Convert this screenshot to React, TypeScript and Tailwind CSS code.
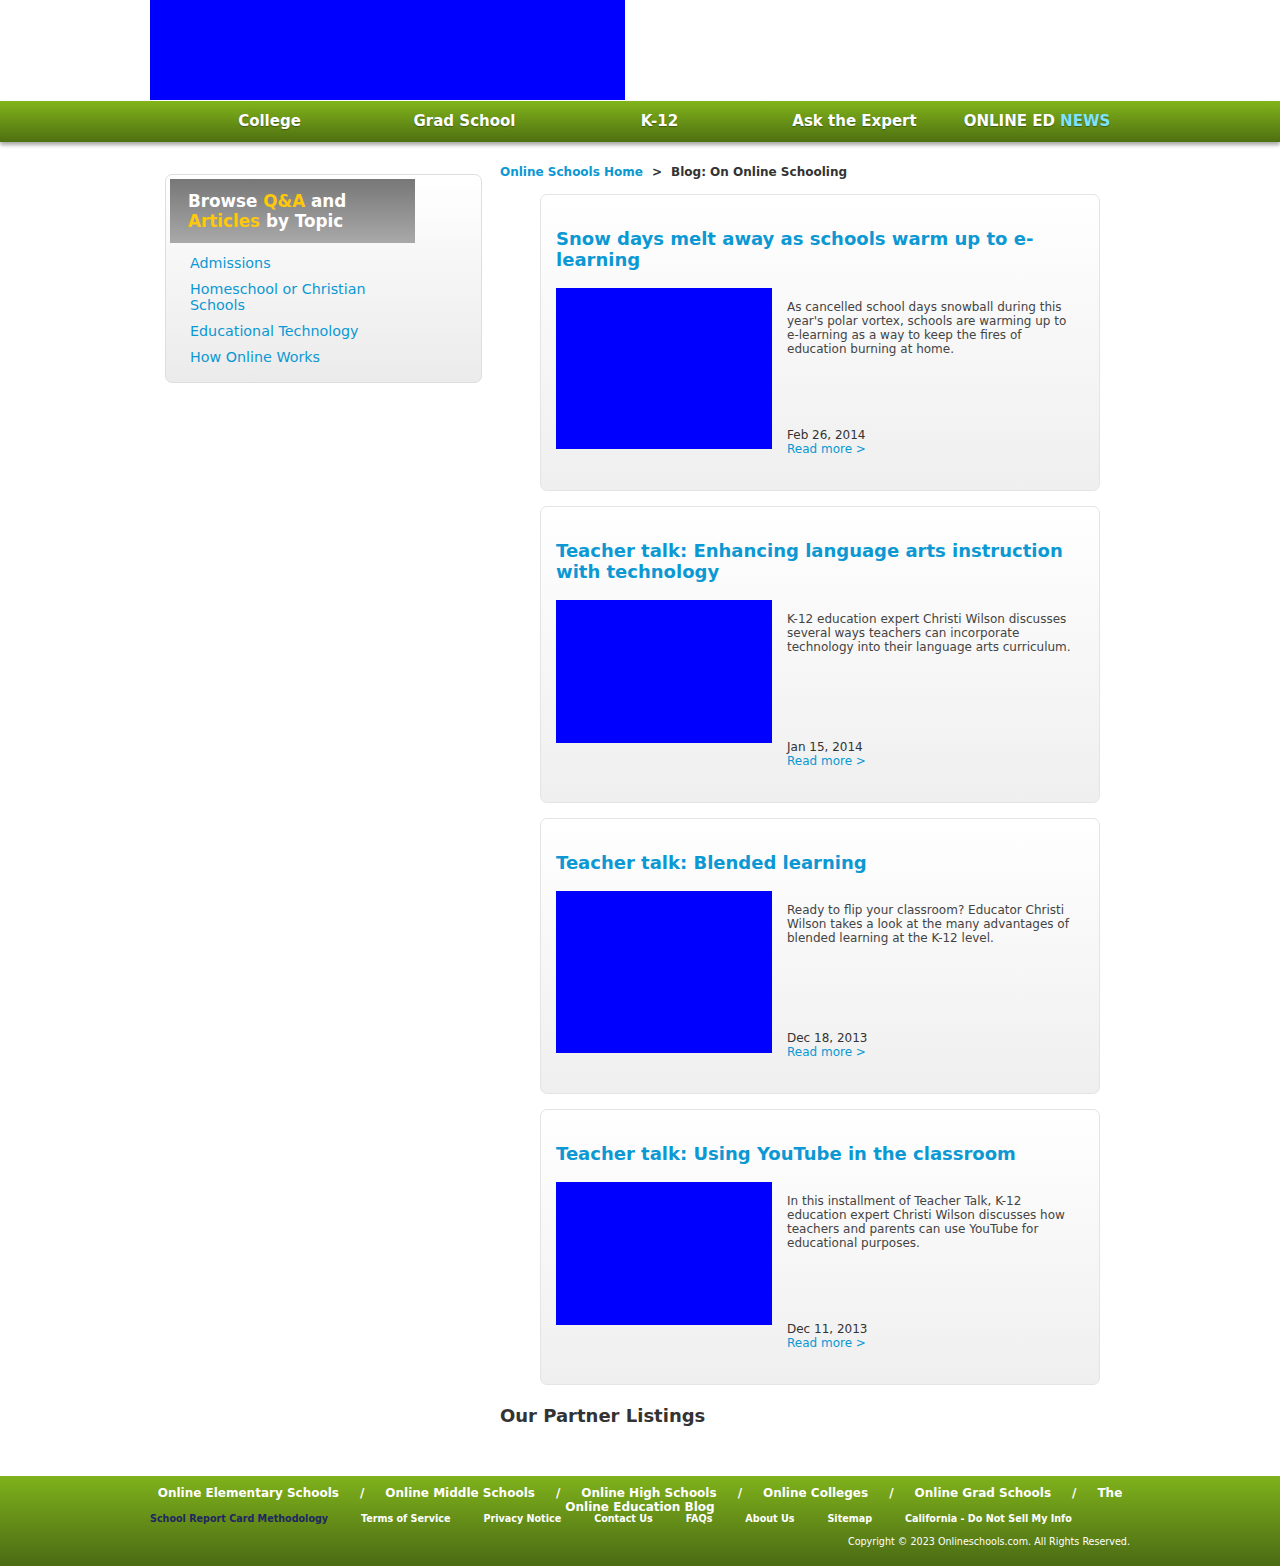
import { Fragment } from 'react';

const navItems = ['College', 'Grad School', 'K-12', 'Ask the Expert'];

const topics = ['Admissions', 'Homeschool or Christian Schools', 'Educational Technology', 'How Online Works'];

const posts = [
  {
    title: 'Snow days melt away as schools warm up to e-learning',
    text: "As cancelled school days snowball during this year's polar vortex, schools are warming up to e-learning as a way to keep the fires of education burning at home.",
    date: 'Feb 26, 2014',
    imgH: 'h-[161px]',
  },
  {
    title: 'Teacher talk: Enhancing language arts instruction with technology',
    text: 'K-12 education expert Christi Wilson discusses several ways teachers can incorporate technology into their language arts curriculum.',
    date: 'Jan 15, 2014',
    imgH: 'h-[143px]',
  },
  {
    title: 'Teacher talk: Blended learning',
    text: 'Ready to flip your classroom? Educator Christi Wilson takes a look at the many advantages of blended learning at the K-12 level.',
    date: 'Dec 18, 2013',
    imgH: 'h-[162px]',
  },
  {
    title: 'Teacher talk: Using YouTube in the classroom',
    text: 'In this installment of Teacher Talk, K-12 education expert Christi Wilson discusses how teachers and parents can use YouTube for educational purposes.',
    date: 'Dec 11, 2013',
    imgH: 'h-[143px]',
  },
];

const footerLinks = [
  'Online Elementary Schools',
  'Online Middle Schools',
  'Online High Schools',
  'Online Colleges',
  'Online Grad Schools',
  'The Online Education Blog',
];

const bottomLinks = ['Terms of Service', 'Privacy Notice', 'Contact Us', 'FAQs', 'About Us', 'Sitemap', 'California - Do Not Sell My Info'];

export default function App() {
  return (
    <div className="min-h-screen bg-white font-['DejaVu_Sans',sans-serif] text-[#333]">
      {/* header */}
      <div className="w-[980px] mx-auto h-[101px]">
        <div className="w-[475px] h-[100px] bg-[#0000ff]" />
      </div>

      {/* nav */}
      <div className="h-[41px] bg-gradient-to-b from-[#82b51b] to-[#4e7011] shadow-[0_3px_4px_rgba(0,0,0,0.35)] relative">
        <div className="w-[980px] mx-auto flex h-full pl-[22px] text-white font-bold text-[15px] [text-shadow:0_1px_1px_rgba(0,0,0,0.35)]">
          {navItems.map((n) => (
            <div key={n} className="w-[195px] flex items-center justify-center pb-[1px]">
              {n}
            </div>
          ))}
          <div className="w-[170px] flex items-center justify-center pb-[1px]">
            ONLINE ED&nbsp;<span className="text-[#7fe3ff]">NEWS</span>
          </div>
        </div>
      </div>

      {/* body */}
      <div className="w-[980px] mx-auto flex">
        <div className="w-[350px] pl-[15px] pt-[32px]">
          <div className="w-[317px] border border-[#dedede] rounded-[7px] bg-gradient-to-b from-white to-[#ebebeb] p-[4px] pb-[17px]">
            <div className="w-[245px] h-[64px] bg-gradient-to-b from-[#777] to-[#a9a9a9] pl-[18px] pt-[12px] text-[16.8px] leading-[20px] font-bold text-white">
              Browse <span className="text-[#ffc80a]">Q&amp;A</span> and
              <br />
              <span className="text-[#ffc80a]">Articles</span> by Topic
            </div>
            <ul className="pl-[20px] pt-[12px] w-[245px] flex flex-col gap-[10px]">
              {topics.map((t) => (
                <li key={t} className="text-[14.3px] leading-[16px] text-[#0b98d3]">
                  {t}
                </li>
              ))}
            </ul>
          </div>
        </div>

        <div className="w-[600px] pt-[23px]">
          <div className="text-[12px] leading-[14px] font-bold">
            <span className="text-[#0b98d3]">Online Schools Home</span>
            <span className="mx-[9px] text-[#333]">&gt;</span>
            <span className="text-[#333]">Blog: On Online Schooling</span>
          </div>

          <div className="mt-[15px] ml-[40px] w-[560px] flex flex-col gap-[15px]">
            {posts.map((p) => (
              <div
                key={p.title}
                className="border border-[#e4e4e4] rounded-[7px] bg-gradient-to-b from-white to-[#efefef] px-[15px] pt-[33px] pb-[34px]"
              >
                <h2 className="text-[18px] leading-[21px] font-bold text-[#0b98d3] mb-[18px] w-[528px]">{p.title}</h2>
                <div className="flex gap-[15px]">
                  <div className={`w-[216px] ${p.imgH} bg-[#0000ff] shrink-0`} />
                  <div className="w-[288px] h-[168px] pt-[12px] flex flex-col text-[12px] leading-[14px]">
                    <p className="text-[#444]">{p.text}</p>
                    <div className="mt-auto text-[#333]">{p.date}</div>
                    <div className="text-[#0b98d3]">Read more &gt;</div>
                  </div>
                </div>
              </div>
            ))}
          </div>

          <h3 className="mt-[20px] text-[18px] leading-[21px] font-bold text-[#333]">Our Partner Listings</h3>
        </div>
      </div>

      {/* footer */}
      <div className="mt-[50px] bg-gradient-to-b from-[#7fb21b] to-[#4b6b14] pt-[10px] pb-[18px]">
        <div className="w-[980px] mx-auto">
          <p className="text-center text-[12px] leading-[14px] font-bold text-white">
            {footerLinks.map((l, i) => (
              <Fragment key={l}>
                {l}
                {i < footerLinks.length - 1 && <span className="mx-[21px]">/</span>}
              </Fragment>
            ))}
          </p>
          <div className="-mt-[1px] flex gap-[33px] font-['DejaVu_Sans_Condensed','DejaVu_Sans',sans-serif] font-bold text-[8pt] leading-[12px] text-white">
            <span className="text-[#1f2660]">School Report Card Methodology</span>
            {bottomLinks.map((l) => (
              <span key={l}>{l}</span>
            ))}
          </div>
          <div className="mt-[11px] text-right font-['DejaVu_Sans_Condensed','DejaVu_Sans',sans-serif] text-[8pt] leading-[12px] text-white">
            Copyright © 2023 Onlineschools.com. All Rights Reserved.
          </div>
        </div>
      </div>
    </div>
  );
}
